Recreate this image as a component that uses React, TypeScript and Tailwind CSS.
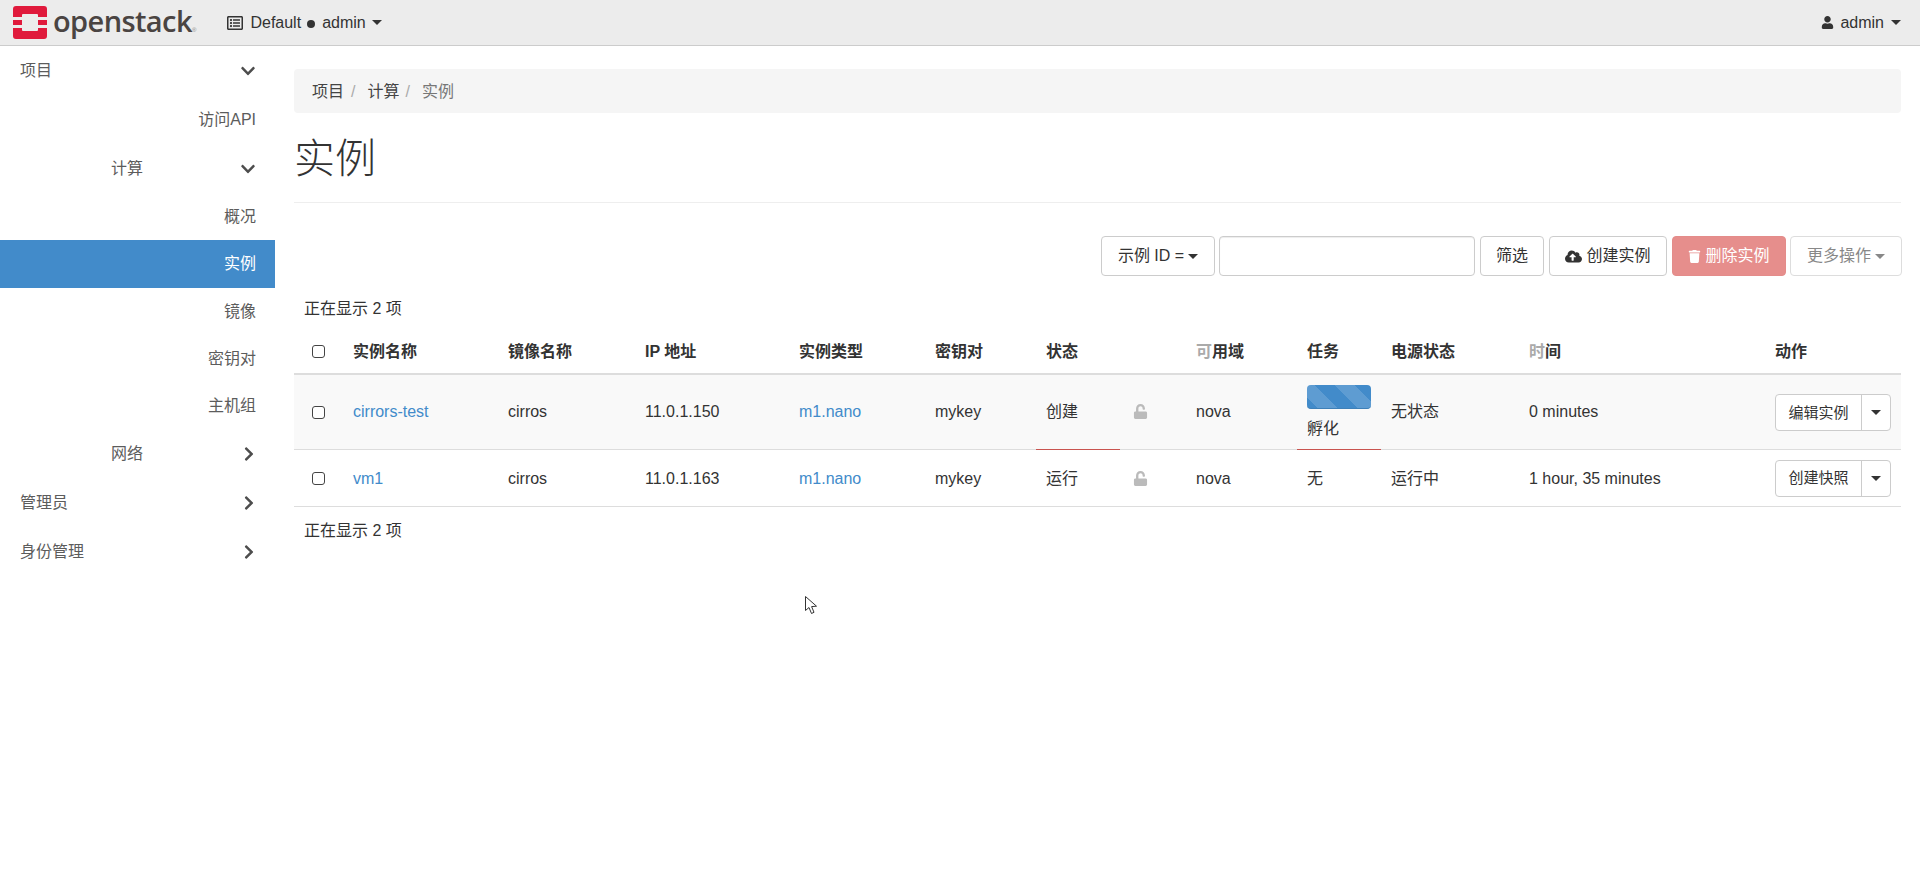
import { FaChevronDown, FaChevronRight, FaUser, FaCloudUploadAlt, FaTrash, FaUnlock, FaRegListAlt } from "react-icons/fa";

const font = "font-['Liberation_Sans','Noto_Sans_CJK_SC',sans-serif]";

function Caret() {
  return <span className="inline-block w-0 h-0 border-x-[5px] border-x-transparent border-t-[5px] border-t-current" />;
}

function Logo() {
  return (
    <svg width="34" height="33" viewBox="0 0 34 33" className="shrink-0">
      <path
        fill="#e01a3c"
        fillRule="evenodd"
        d="M3 0H31a3 3 0 0 1 3 3V11H25V9a1 1 0 0 0-1-1H10a1 1 0 0 0-1 1V11H0V3a3 3 0 0 1 3-3ZM0 14H9V19H0ZM25 14H34V19H25ZM0 22H9V24a1 1 0 0 0 1 1H24a1 1 0 0 0 1-1V22H34V30a3 3 0 0 1-3 3H3a3 3 0 0 1-3-3Z"
      />
    </svg>
  );
}

function Navbar() {
  return (
    <header className="h-[46px] shrink-0 bg-[#ececec] border-b border-[#cccccc] flex items-center pl-[13px] pr-[19px] text-[#333333] text-base">
      <Logo />
      <span className="ml-[6px] w-[139px] text-[29px] leading-[40px] font-semibold font-['Open_Sans',sans-serif] text-[#4a4442] tracking-[-0.6px] -mt-[4px]">openstack</span>
      <span className="text-[6px] leading-none text-[#888888] mt-[15px]">®</span>
      <div className="ml-[31px] flex items-center">
        <FaRegListAlt className="text-[16px] mr-[7px]" />
        <span>Default</span>
        <span className="ml-[6px] mr-[7px] w-[8px] h-[8px] rounded-full bg-[#333333] mt-[3px]" />
        <span>admin</span>
        <span className="ml-[6px] flex"><Caret /></span>
      </div>
      <div className="ml-auto flex items-center">
        <FaUser className="text-[13px] mr-[6px]" />
        <span>admin</span>
        <span className="ml-[7px] flex"><Caret /></span>
      </div>
    </header>
  );
}

function SideRow({ label, h, align, icon, active }: { label: string; h: string; align: "left" | "mid" | "right"; icon?: "down" | "right"; active?: boolean }) {
  return (
    <div className={`${h} flex items-center pr-[19px] text-base ${active ? "bg-[#428bca] text-white" : "text-[#5c5c5c]"} ${align === "left" ? "pl-[20px]" : align === "mid" ? "pl-[111px]" : "justify-end"}`}>
      <span>{label}</span>
      {icon === "down" && <FaChevronDown className="ml-auto text-[16px] text-[#4d4d4d]" />}
      {icon === "right" && <FaChevronRight className="ml-auto -mr-[1px] text-[16px] text-[#4d4d4d]" />}
    </div>
  );
}

function Sidebar() {
  return (
    <aside className="w-[275px] shrink-0 pt-px">
      <SideRow label="项目" h="h-[48px]" align="left" icon="down" />
      <SideRow label="访问API" h="h-[49px]" align="right" />
      <SideRow label="计算" h="h-[49px]" align="mid" icon="down" />
      <SideRow label="概况" h="h-[47px]" align="right" />
      <SideRow label="实例" h="h-[48px]" align="right" active />
      <SideRow label="镜像" h="h-[47px]" align="right" />
      <SideRow label="密钥对" h="h-[47px]" align="right" />
      <SideRow label="主机组" h="h-[47px]" align="right" />
      <SideRow label="网络" h="h-[49px]" align="mid" icon="right" />
      <SideRow label="管理员" h="h-[49px]" align="left" icon="right" />
      <SideRow label="身份管理" h="h-[50px]" align="left" icon="right" />
    </aside>
  );
}

function Toolbar() {
  const btn = "h-[40px] rounded-[4px] border border-[#cccccc] bg-white flex items-center justify-center text-base text-[#333333]";
  return (
    <div className="mt-[33px] -mr-px flex justify-end items-center">
      <div className={`${btn} w-[114px] mr-[4px]`}>
        <span>示例 ID =</span>
        <span className="ml-[4px] flex"><Caret /></span>
      </div>
      <div className="h-[40px] w-[256px] mr-[5px] rounded-[4px] border border-[#cccccc] bg-white shadow-[inset_0_1px_1px_rgba(0,0,0,0.075)]" />
      <div className={`${btn} w-[64px] mr-[5px]`}>筛选</div>
      <div className={`${btn} w-[118px] mr-[5px]`}>
        <FaCloudUploadAlt className="mr-[4px] text-[17px]" />
        <span>创建实例</span>
      </div>
      <div className="h-[40px] w-[114px] mr-[4px] rounded-[4px] border border-[#e48c8a] bg-[#e68e8c] flex items-center justify-center text-base text-white">
        <FaTrash className="mr-[4px] text-[13px]" />
        <span>删除实例</span>
      </div>
      <div className={`${btn} w-[112px] border-[#dddddd] text-[#888888]`}>
        <span>更多操作</span>
        <span className="ml-[4px] flex"><Caret /></span>
      </div>
    </div>
  );
}

function Check() {
  return <span className="block w-[13px] h-[13px] rounded-[3px] border border-[#444444] bg-white" />;
}

function ActionButton({ label }: { label: string }) {
  return (
    <div className="flex h-[37px] w-[116px] rounded-[4px] border border-[#cccccc] bg-white text-[#333333] text-[15px]">
      <span className="w-[86px] flex items-center justify-center border-r border-[#cccccc]">{label}</span>
      <span className="flex-1 flex items-center justify-center">
        <Caret />
      </span>
    </div>
  );
}

function Progress() {
  return (
    <div className="w-[64px] h-[24px] rounded-[4px] mb-[8px] border-b border-[#3e80b8] bg-[#428bca] bg-[linear-gradient(45deg,rgba(255,255,255,0.15)_25%,transparent_25%,transparent_50%,rgba(255,255,255,0.15)_50%,rgba(255,255,255,0.15)_75%,transparent_75%,transparent)] bg-[length:40px_40px] bg-[position:-12px_0]" />
  );
}

const rows = [
  { name: "cirrors-test", ip: "11.0.1.150", status: "创建", power: "无状态", time: "0 minutes", action: "编辑实例", h: "h-[75px]", bg: "bg-[#f9f9f9]", busy: true },
  { name: "vm1", ip: "11.0.1.163", status: "运行", power: "运行中", time: "1 hour, 35 minutes", action: "创建快照", h: "h-[57px]", bg: "bg-white", busy: false },
];

function InstanceTable() {
  const th = "pl-[10px] pt-[2px] align-middle font-semibold text-left";
  return (
    <table className="w-full table-fixed border-collapse text-base text-[#333333]">
      <colgroup>
        <col className="w-[49px]" />
        <col className="w-[155px]" />
        <col className="w-[137px]" />
        <col className="w-[154px]" />
        <col className="w-[136px]" />
        <col className="w-[111px]" />
        <col className="w-[84px]" />
        <col className="w-[66px]" />
        <col className="w-[111px]" />
        <col className="w-[84px]" />
        <col className="w-[138px]" />
        <col className="w-[246px]" />
        <col className="w-[136px]" />
      </colgroup>
      <thead>
        <tr className="h-[45px] border-b-2 border-[#dddddd]">
          <th className="pl-[18px] align-middle"><Check /></th>
          <th className={th}>实例名称</th>
          <th className={th}>镜像名称</th>
          <th className={th}>IP 地址</th>
          <th className={th}>实例类型</th>
          <th className={th}>密钥对</th>
          <th className={th}>状态</th>
          <th />
          <th className={th}><span className="text-[#aaaaaa]">可</span>用域</th>
          <th className={th}>任务</th>
          <th className={th}>电源状态</th>
          <th className={th}><span className="text-[#aaaaaa]">时</span>间</th>
          <th className={th}>动作</th>
        </tr>
      </thead>
      <tbody>
        {rows.map((r) => {
          const td = `pl-[10px] align-middle font-normal text-left ${r.busy ? "" : "pt-[2px]"}`;
          return (
            <tr key={r.name} className={`${r.h} ${r.bg} border-b border-[#dddddd]`}>
              <td className="pl-[18px] pt-[2px] align-middle"><Check /></td>
              <td className={td}><span className="text-[#428bca]">{r.name}</span></td>
              <td className={td}>cirros</td>
              <td className={td}>{r.ip}</td>
              <td className={td}><span className="text-[#428bca]">m1.nano</span></td>
              <td className={td}>mykey</td>
              <td className={`${td} ${r.busy ? "border-b border-[#c9534f]" : ""}`}>{r.status}</td>
              <td className={`pl-[13px] align-middle ${r.busy ? "" : "pt-[2px]"}`}><FaUnlock className="text-[15px] text-[#bbbbbb]" /></td>
              <td className={td}>nova</td>
              <td className={`${td} ${r.busy ? "pt-[3px] border-b border-[#c9534f]" : ""}`}>
                {r.busy ? (
                  <div className="flex flex-col leading-[24px]">
                    <Progress />
                    <span>孵化</span>
                  </div>
                ) : "无"}
              </td>
              <td className={td}>{r.power}</td>
              <td className={td}>{r.time}</td>
              <td className="pl-[10px] pt-[2px] align-middle"><ActionButton label={r.action} /></td>
            </tr>
          );
        })}
      </tbody>
    </table>
  );
}

function Cursor() {
  return (
    <svg width="14" height="20" viewBox="0 0 14 20" className="absolute left-[804px] top-[595px]">
      <path d="M1.5 1.5V15.5L5 12.5L7.5 18.5L10 17.3L7.6 11.6L12.5 11.2Z" fill="white" stroke="#333333" strokeWidth="1" strokeLinejoin="round" />
    </svg>
  );
}

export default function App() {
  return (
    <div className={`${font} relative w-[1920px] h-[869px] overflow-hidden bg-white flex flex-col`}>
      <Navbar />
      <div className="flex flex-1">
        <Sidebar />
        <main className="flex-1 pl-[19px] pr-[19px] text-[#333333]">
          <nav className="mt-[23px] h-[44px] rounded-[4px] bg-[#f5f5f5] flex items-center pl-[18px] pt-[2px] text-base text-[#444444]">
            <span>项目</span>
            <span className="ml-[7px] mr-[12px] text-[#aaaaaa]">/</span>
            <span>计算</span>
            <span className="ml-[6px] mr-[12px] text-[#aaaaaa]">/</span>
            <span className="text-[#777777]">实例</span>
          </nav>
          <div className="h-[90px] pt-[3px] border-b border-[#eeeeee] flex items-center">
            <h1 className="text-[41px] font-light leading-none text-[#333333]">实例</h1>
          </div>
          <Toolbar />
          <p className="mt-[22px] mb-[9px] pl-[10px] text-base leading-[22px]">正在显示 2 项</p>
          <InstanceTable />
          <p className="mt-[13px] pl-[10px] text-base leading-[22px]">正在显示 2 项</p>
        </main>
      </div>
      <Cursor />
    </div>
  );
}
